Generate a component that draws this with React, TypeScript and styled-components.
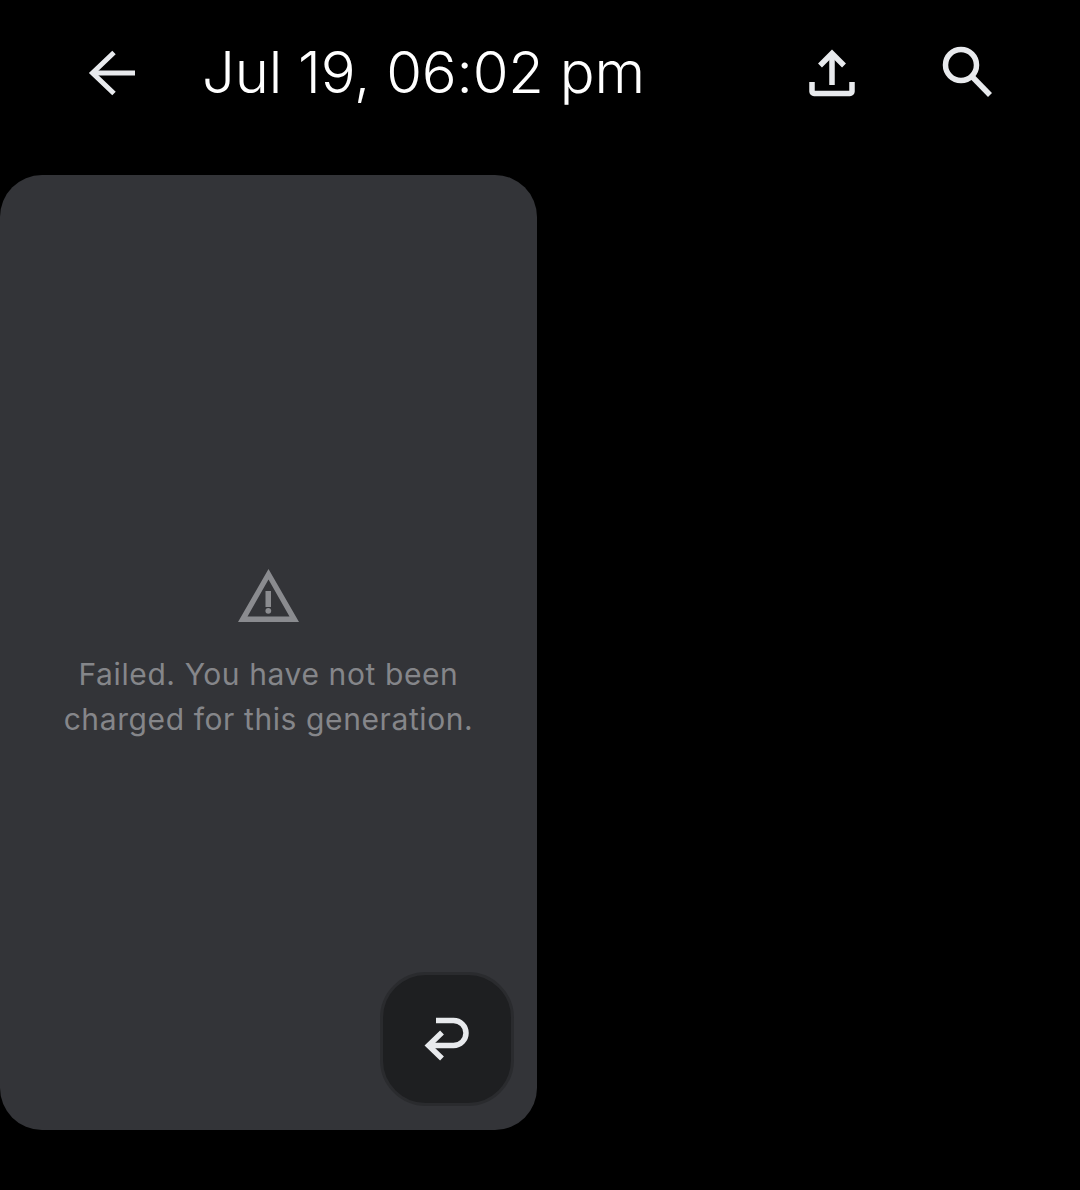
import React from "react";
import styled, { createGlobalStyle } from "styled-components";

const Global = createGlobalStyle`
  html, body { margin: 0; padding: 0; background: #000; }
  body { font-family: "Inter", "Liberation Sans", sans-serif; }
`;

const Page = styled.div`
  width: 1080px;
  height: 1190px;
  background: #000;
  overflow: hidden;
`;

const Toolbar = styled.header`
  display: flex;
  align-items: center;
  height: 146px;
  padding: 0 83px 0 83px;
  box-sizing: border-box;
`;

const IconButton = styled.button`
  display: flex;
  align-items: center;
  justify-content: center;
  width: 60px;
  height: 60px;
  padding: 0;
  border: 0;
  background: none;
  flex: none;
`;

const Title = styled.h1`
  flex: 1;
  margin: 0 0 2px 59px;
  font-family: "Inter", sans-serif;
  font-size: 58px;
  font-weight: 350;
  line-height: 1;
  letter-spacing: -0.2px;
  color: #fff;
  white-space: nowrap;
`;

const Actions = styled.div`
  display: flex;
  gap: 75px;
`;

const Card = styled.section`
  position: relative;
  display: flex;
  flex-direction: column;
  align-items: center;
  justify-content: center;
  box-sizing: border-box;
  width: 537px;
  height: 955px;
  margin-top: 29px;
  padding-top: 6px;
  border-radius: 42px;
  background: #333438;
`;

const Message = styled.p`
  width: 430px;
  margin: 29px 0 0;
  font-family: "Inter", sans-serif;
  font-size: 30px;
  line-height: 45px;
  letter-spacing: 0.6px;
  text-align: center;
  color: #85868a;
`;

const RetryButton = styled.button`
  position: absolute;
  right: 23px;
  bottom: 24px;
  display: flex;
  align-items: center;
  justify-content: center;
  box-sizing: border-box;
  width: 134px;
  height: 134px;
  padding: 8px 0 0 10px;
  border: 3px solid #2a2b2e;
  border-radius: 46px;
  background: #1e1f21;
`;

const Stroke = styled.svg`
  display: block;
  fill: none;
  stroke: #e8eaed;
`;

const App = () => (
  <Page>
    <Global />
    <Toolbar>
      <IconButton aria-label="Back">
        <Stroke width="60" height="60" viewBox="0 0 60 60" strokeWidth="5">
          <path d="M52 30H10" />
          <path d="M31 9.5 9.5 30 31 50.5" />
        </Stroke>
      </IconButton>
      <Title>Jul 19, 06:02 pm</Title>
      <Actions>
        <IconButton aria-label="Share">
          <Stroke width="60" height="60" viewBox="0 0 60 60" strokeWidth="5.5">
            <path d="M30 42V11" />
            <path d="M18 22.5 30 10.5 42 22.5" />
            <path d="M10 39V48.5a2 2 0 0 0 2 2H48a2 2 0 0 0 2-2V39" />
          </Stroke>
        </IconButton>
        <IconButton aria-label="Search">
          <Stroke width="60" height="60" viewBox="0 0 60 60" strokeWidth="5.5">
            <circle cx="24" cy="22" r="15.5" />
            <path d="M35 33.5 53 52" />
          </Stroke>
        </IconButton>
      </Actions>
    </Toolbar>
    <Card>
      <svg width="62" height="54" viewBox="0 0 62 54" aria-hidden="true">
        <path
          fill="#8a8b8f"
          fillRule="evenodd"
          d="M30.5 0 61 53H0ZM30.5 10.5 9.5 47.5H51.5Z"
        />
        <rect x="27.5" y="22" width="5.5" height="16" fill="#8a8b8f" />
        <circle cx="30.3" cy="41.8" r="2.9" fill="#8a8b8f" />
      </svg>
      <Message>Failed. You have not been charged for this generation.</Message>
      <RetryButton aria-label="Retry">
        <Stroke width="60" height="60" viewBox="0 0 60 60" strokeWidth="5.5">
          <path d="M14 7.5H31.5a12.5 12.5 0 0 1 0 25H6" />
          <path d="M20 19.5 6.5 32.5 20 45.5" />
        </Stroke>
      </RetryButton>
    </Card>
  </Page>
);

export default App;
